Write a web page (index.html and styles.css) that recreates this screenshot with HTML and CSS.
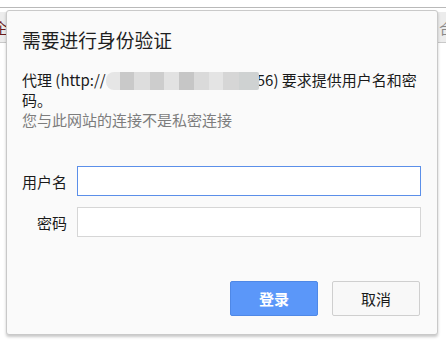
FILE: index.html
```html
<!DOCTYPE html>
<html lang="zh-CN">
<head>
<meta charset="utf-8">
<title>需要进行身份验证</title>
<link rel="stylesheet" href="styles.css">
</head>
<body>
<div class="page">
  <div class="topline"></div>
  <div class="band">
    <span class="band-left">企</span>
    <span class="band-right"><i class="caret"></i>合</span>
  </div>
</div>

<div class="dialog" role="dialog">
  <h1 class="title">需要进行身份验证</h1>
  <p class="message">代理 (http://<span class="blur"></span>56) 要求提供用户名和密码。</p>
  <p class="note">您与此网站的连接不是私密连接</p>

  <form class="form">
    <label class="row">
      <span class="label">用户名</span>
      <input class="field focused" type="text">
    </label>
    <label class="row">
      <span class="label">密码</span>
      <input class="field" type="password">
    </label>
    <div class="actions">
      <button type="button" class="btn primary">登录</button>
      <button type="button" class="btn">取消</button>
    </div>
  </form>
</div>
</body>
</html>
```

FILE: styles.css
```css
* { box-sizing: border-box; }
html, body {
  margin: 0;
  padding: 0;
  background: #ffffff;
  width: 446px;
  height: 364px;
  overflow: hidden;
  font-family: "Noto Sans CJK SC", "Noto Sans", sans-serif;
}
.page {
  padding-top: 7px;
}
.topline {
  height: 1px;
  background: #b9b9b9;
}
.band {
  margin-top: 4px;
  height: 31px;
  background: #ececec;
  border-bottom: 1px solid #c9c9c9;
  display: flex;
  justify-content: space-between;
  align-items: center;
  font-size: 15px;
  color: #6b1a1a;
  overflow: hidden;
}
.band-left { margin-left: -7px; }
.band-right {
  display: flex;
  align-items: center;
  margin-right: -8px;
  color: #8a8a8a;
}
.caret {
  display: inline-block;
  width: 2px;
  height: 7px;
  background: #4f8de8;
  margin-right: 1px;
}

.dialog {
  position: absolute;
  left: 6px;
  top: 10px;
  width: 432px;
  height: 325px;
  background: #fafafa;
  border: 1px solid #c9c9c9;
  border-radius: 3px;
  box-shadow: 0 2px 3px rgba(0, 0, 0, 0.22);
  padding: 16px 16px 0 15px;
  color: #1a1a1a;
}
.title {
  margin: 0;
  font-size: 18.75px;
  font-weight: normal;
  line-height: 26px;
  color: #1f1f1f;
}
.message {
  margin: 17px 0 0 0;
  font-size: 15px;
  line-height: 20px;
}
.blur {
  display: inline-block;
  vertical-align: -4px;
  width: 153px;
  height: 18px;
  margin-right: -2px;
  position: relative;
  border-radius: 8px 2px 2px 8px;
  background: linear-gradient(90deg,
    #e6e6e6 0, #e6e6e6 14px,
    #c9c9c9 14px, #c9c9c9 28px,
    #dddddd 28px, #dddddd 44px,
    #cdcdcd 44px, #cdcdcd 58px,
    #e2e2e2 58px, #e2e2e2 73px,
    #c6c6c6 73px, #c6c6c6 88px,
    #dadada 88px, #dadada 103px,
    #e4e4e4 103px, #e4e4e4 117px,
    #d6d6d6 117px, #d6d6d6 133px,
    #cfd2d2 133px, #cfd2d2 153px);
}
.note {
  margin: 0;
  font-size: 15px;
  line-height: 20px;
  color: #7d7d7d;
}
.form {
  margin-top: 36px;
  display: flex;
  flex-direction: column;
  gap: 11px;
}
.row {
  display: flex;
  align-items: center;
  gap: 10px;
}
.label {
  width: 45px;
  text-align: right;
  font-size: 15px;
  color: #1a1a1a;
}
.field {
  flex: 1;
  height: 30px;
  border: 1px solid #d6d6d6;
  background: #ffffff;
  outline: none;
  margin: 0;
  padding: 0 6px;
  font: inherit;
  font-size: 15px;
}
.field.focused {
  border-color: #5b8fe9;
}
.actions {
  margin-top: 33px;
  display: flex;
  justify-content: flex-end;
  gap: 14px;
  padding-right: 1px;
}
.btn {
  width: 88px;
  height: 35px;
  border: 1px solid #cfcfcf;
  border-radius: 2px;
  background: #f8f8f8;
  color: #1a1a1a;
  font: inherit;
  font-size: 15px;
  padding: 0;
}
.btn.primary {
  background: #5b97f9;
  border-color: #4f88e6;
  color: #ffffff;
  font-weight: bold;
}
```
